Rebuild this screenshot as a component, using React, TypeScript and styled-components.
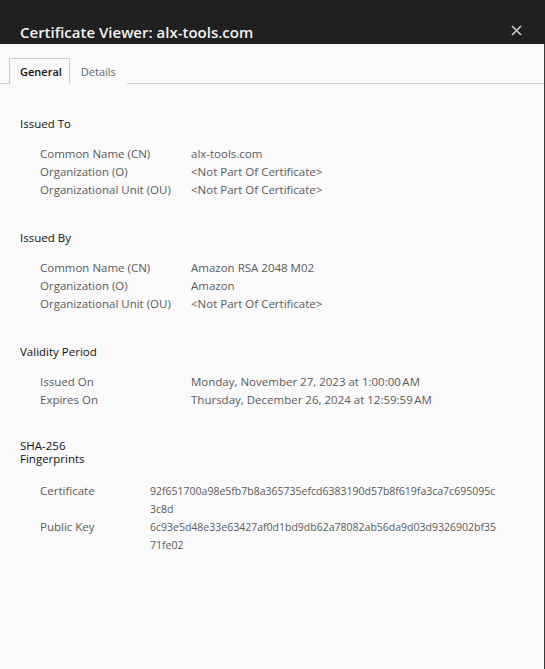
import React from "react";
import styled, { createGlobalStyle } from "styled-components";

const Global = createGlobalStyle`
  html, body { margin: 0; padding: 0; background: #fafafa; }
  body { font-family: "Open Sans", "Noto Sans", sans-serif; }
`;

const Window = styled.div`
  width: 545px;
  height: 669px;
  display: flex;
  flex-direction: column;
  background: #fafafa;
  box-sizing: border-box;
`;

const TitleBar = styled.div`
  height: 44px;
  flex: none;
  background: #202020;
  display: flex;
  align-items: flex-end;
  justify-content: space-between;
  padding: 0 23px 1px 20px;
  box-sizing: border-box;
`;

const Title = styled.h1`
  margin: 0;
  font-size: 15px;
  font-weight: 600;
  color: #f2f2f2;
  line-height: 22px;
`;

const CloseButton = styled.button`
  border: none;
  background: transparent;
  padding: 0;
  margin: 0 0 7px 0;
  width: 11px;
  height: 11px;
  display: flex;
  align-items: center;
  justify-content: center;
  cursor: pointer;
`;

const Content = styled.div`
  flex: 1;
  display: flex;
  flex-direction: column;
  border-right: 1px solid #3a3a3a;
`;

const TabBar = styled.div`
  display: flex;
  margin-top: 14px;
  padding-left: 9px;
  border-bottom: 1px solid #cccccc;
  height: 25px;
`;

const Tab = styled.div<{ $active?: boolean }>`
  display: flex;
  align-items: center;
  padding: 0 ${(p) => (p.$active ? "7px 0 10px" : "10px")};
  font-size: 11px;
  font-weight: ${(p) => (p.$active ? 600 : 400)};
  color: ${(p) => (p.$active ? "#111" : "#666")};
  border: 1px solid ${(p) => (p.$active ? "#cccccc" : "transparent")};
  border-bottom: none;
  background: #fafafa;
  margin-bottom: -1px;
  box-sizing: border-box;
  height: 26px;
  padding-bottom: 1px;
`;

const Body = styled.div`
  padding: 31px 20px 0 20px;
  display: flex;
  flex-direction: column;
`;

const Section = styled.section`
  display: flex;
  flex-direction: column;
  margin-bottom: 30px;
`;

const Heading = styled.h2<{ $narrow?: boolean }>`
  margin: 0 0 12px 0;
  font-size: 11.5px;
  font-weight: 400;
  color: #111;
  line-height: ${(p) => (p.$narrow ? "13px" : "18px")};
  max-width: ${(p) => (p.$narrow ? "70px" : "none")};
  padding-bottom: ${(p) => (p.$narrow ? "5px" : "0")};
`;

const Rows = styled.div<{ $labelWidth: number }>`
  display: grid;
  grid-template-columns: ${(p) => p.$labelWidth}px 1fr;
  padding-left: 20px;
  font-size: 11.5px;
  line-height: 18px;
  color: #5a5a5a;
`;

const Label = styled.div``;

const Value = styled.div<{ $hash?: boolean }>`
  font-size: ${(p) => (p.$hash ? "10.5px" : "inherit")};
  word-break: ${(p) => (p.$hash ? "break-all" : "normal")};
  max-width: ${(p) => (p.$hash ? "350px" : "none")};
`;

type Row = [string, string];

const InfoSection = ({
  title,
  rows,
  labelWidth = 151,
  narrow,
  hash,
}: {
  title: string;
  rows: Row[];
  labelWidth?: number;
  narrow?: boolean;
  hash?: boolean;
}) => (
  <Section>
    <Heading $narrow={narrow}>{title}</Heading>
    <Rows $labelWidth={labelWidth}>
      {rows.map(([l, v]) => (
        <React.Fragment key={l}>
          <Label>{l}</Label>
          <Value $hash={hash}>{v}</Value>
        </React.Fragment>
      ))}
    </Rows>
  </Section>
);

export default function App() {
  return (
    <>
      <Global />
      <Window>
        <TitleBar>
          <Title>Certificate Viewer: alx-tools.com</Title>
          <CloseButton aria-label="Close">
            <svg width="11" height="11" viewBox="0 0 11 11">
              <path d="M1 1 L10 10 M10 1 L1 10" stroke="#cfcfcf" strokeWidth="1.6" />
            </svg>
          </CloseButton>
        </TitleBar>
        <Content>
          <TabBar>
            <Tab $active>General</Tab>
            <Tab>Details</Tab>
          </TabBar>
          <Body>
            <InfoSection
              title="Issued To"
              rows={[
                ["Common Name (CN)", "alx-tools.com"],
                ["Organization (O)", "<Not Part Of Certificate>"],
                ["Organizational Unit (OU)", "<Not Part Of Certificate>"],
              ]}
            />
            <InfoSection
              title="Issued By"
              rows={[
                ["Common Name (CN)", "Amazon RSA 2048 M02"],
                ["Organization (O)", "Amazon"],
                ["Organizational Unit (OU)", "<Not Part Of Certificate>"],
              ]}
            />
            <InfoSection
              title="Validity Period"
              rows={[
                ["Issued On", "Monday, November 27, 2023 at 1:00:00\u202FAM"],
                ["Expires On", "Thursday, December 26, 2024 at 12:59:59\u202FAM"],
              ]}
            />
            <InfoSection
              title="SHA-256 Fingerprints"
              narrow
              hash
              labelWidth={110}
              rows={[
                ["Certificate", "92f651700a98e5fb7b8a365735efcd6383190d57b8f619fa3ca7c695095c3c8d"],
                ["Public Key", "6c93e5d48e33e63427af0d1bd9db62a78082ab56da9d03d9326902bf3571fe02"],
              ]}
            />
          </Body>
        </Content>
      </Window>
    </>
  );
}
